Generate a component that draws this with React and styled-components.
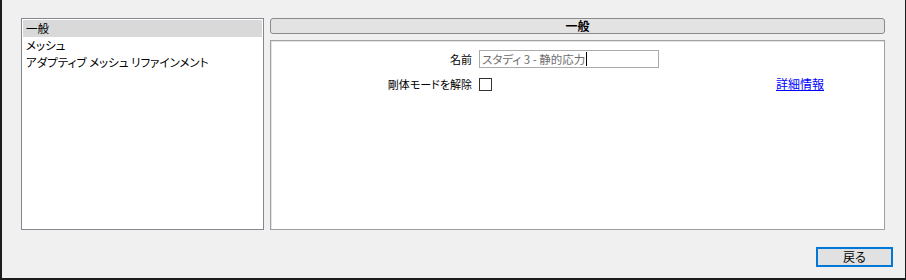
import React from 'react';
import styled, { createGlobalStyle } from 'styled-components';

const font = `'Yu Gothic UI', 'Noto Sans CJK JP', 'Noto Sans', sans-serif`;

const Global = createGlobalStyle`
  html, body {
    margin: 0;
    padding: 0;
    background: #f0f0f0;
  }
  * {
    box-sizing: border-box;
  }
`;

const Window = styled.div`
  width: 906px;
  height: 280px;
  display: flex;
  flex-direction: column;
  background: #f0f0f0;
  border-left: 2px solid #1c1c1c;
  border-right: 1px solid #1c1c1c;
  border-bottom: 2px solid #1c1c1c;
  padding: 18px 0 0 19px;
  font-family: ${font};
  font-size: 11px;
  font-feature-settings: 'palt';
  color: #000;
`;

const Body = styled.div`
  display: flex;
  gap: 6px;
  height: 212px;
  margin-right: 20px;
`;

const List = styled.ul`
  width: 243px;
  margin: 0;
  padding: 1px;
  list-style: none;
  background: #fff;
  border: 1px solid #828790;
`;

const Item = styled.li`
  height: 17px;
  line-height: 17px;
  padding-left: 3px;
  font-size: 11.5px;
  white-space: nowrap;
  background: ${({ selected }) => (selected ? '#d9d9d9' : 'transparent')};
`;

const Side = styled.div`
  flex: 1;
  display: flex;
  flex-direction: column;
  gap: 6px;
`;

const Header = styled.div`
  height: 16px;
  border: 1px solid #8a8a8a;
  border-radius: 3px;
  background: #e3e3e3;
  text-align: center;
  font-size: 12px;
  font-weight: bold;
  line-height: 14px;
`;

const Panel = styled.div`
  flex: 1;
  background: #fff;
  border: 1px solid #a0a0a0;
  box-shadow: inset 1px 1px 0 #e3e3e3;
  padding-top: 9px;
  display: grid;
  grid-template-columns: 201px 180px 1fr;
  grid-auto-rows: min-content;
  column-gap: 7px;
  row-gap: 8px;
  align-items: center;
  align-content: start;
`;

const Label = styled.span`
  text-align: right;
  white-space: nowrap;
  line-height: 16px;
`;

const Field = styled.div`
  height: 18px;
  border: 1px solid #ababab;
  padding-left: 2px;
  display: flex;
  align-items: center;
  font-size: 11.5px;
  color: #6d6d6d;
  white-space: nowrap;
`;

const Caret = styled.span`
  display: inline-block;
  width: 1px;
  height: 14px;
  margin-left: 1px;
  background: #000;
`;

const Check = styled.span`
  width: 13px;
  height: 13px;
  border: 1px solid #333;
  background: #fff;
`;

const Link = styled.a`
  margin-left: 110px;
  color: #0000ff;
  text-decoration: underline;
  font-size: 12px;
  line-height: 16px;
  cursor: pointer;
`;

const Footer = styled.div`
  display: flex;
  justify-content: flex-end;
  padding: 17px 12px 0 0;
`;

const Button = styled.button`
  width: 77px;
  height: 20px;
  padding: 0;
  border: 2px solid #0078d7;
  background: #e1e1e1;
  font-family: ${font};
  font-size: 12px;
  font-feature-settings: 'palt';
  color: #000;
  line-height: 16px;
`;

const items = ['一般', 'メッシュ', 'アダプティブ メッシュ リファインメント'];

export default function App() {
  return (
    <>
      <Global />
      <Window>
        <Body>
          <List>
            {items.map((t, i) => (
              <Item key={t} selected={i === 0}>{t}</Item>
            ))}
          </List>
          <Side>
            <Header>一般</Header>
            <Panel>
              <Label>名前</Label>
              <Field>
                スタディ 3 - 静的応力
                <Caret />
              </Field>
              <span />
              <Label>剛体モードを解除</Label>
              <Check />
              <Link>詳細情報</Link>
            </Panel>
          </Side>
        </Body>
        <Footer>
          <Button>戻る</Button>
        </Footer>
      </Window>
    </>
  );
}
